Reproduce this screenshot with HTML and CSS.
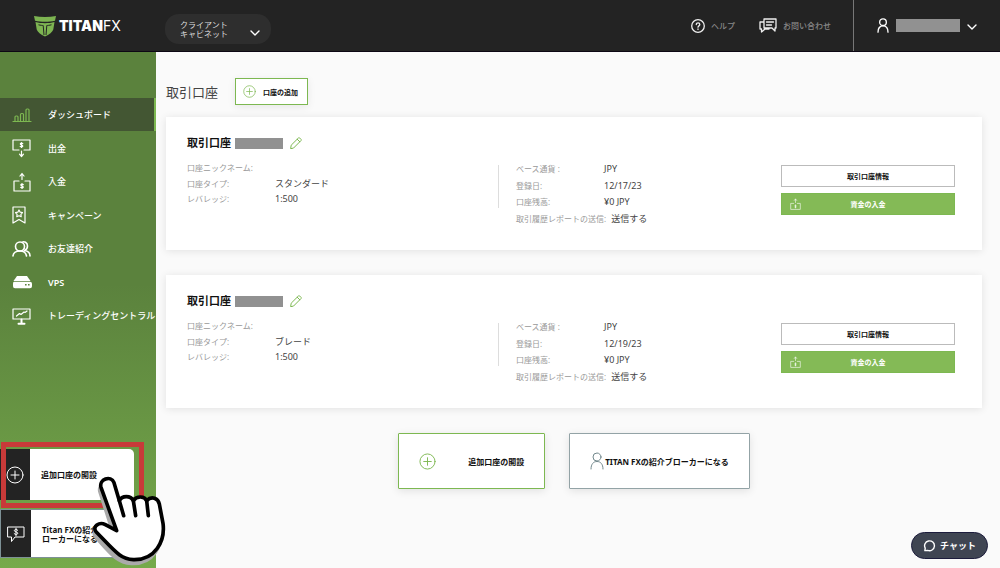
FILE: index.html
```html
<!DOCTYPE html>
<html lang="ja">
<head>
<meta charset="utf-8">
<meta name="viewport" content="width=device-width, initial-scale=1">
<title>Titan FX クライアントキャビネット</title>
<link rel="stylesheet" href="styles.css">
</head>
<body>
<svg class="defs" aria-hidden="true">
  <symbol id="plus" viewBox="0 0 18 18"><circle cx="9" cy="9" r="8"/><path d="M9 5v8M5 9h8"/></symbol>
  <symbol id="chevron" viewBox="0 0 10 6"><path d="M1 1l4 4 4-4"/></symbol>
  <symbol id="person" viewBox="0 0 14 18"><circle cx="7" cy="5" r="4"/><path d="M1 17c0-5 2.500-7.500 6-7.500s6 2.500 6 7.500"/></symbol>
  <symbol id="deposit" viewBox="0 0 18 20"><path d="M6 9H1v10h16V9h-5M9 7.500V2M7 4l2-2.500L11 4"/><path d="M10.300 12.600c-.8-.8-2.500-.5-2.500.5s2.500.8 2.500 1.900-1.800 1.200-2.600.4M9 11.500v5"/></symbol>
  <symbol id="pencil" viewBox="0 0 12 12"><path d="M.7 11.300l.5-3.100L8.300 1.100c.5-.5 1-.5 1.500 0l1.100 1.100c.5.5.5 1 0 1.500l-7.100 7.100zM7.200 2.200l2.600 2.600"/></symbol>
</svg>

<header class="topbar">
  <a class="logo" href="#" aria-label="TITANFX">
    <svg class="logo-mark" viewBox="0 0 22 22" aria-hidden="true">
      <path class="logo-fill" d="M0 1c7 1.300 15 1.300 22 0l-1 4.700c-6 1.400-14 1.400-20 0z"/>
      <path class="logo-fill" d="M1.500 7C4.500 7.800 7.500 8.200 11 8.200s6.500-.4 9.500-1.200l-1.200 7.500c-.7 2.500-4 5-8.300 7-4.300-2-7.600-4.500-8.300-7z"/>
      <path class="logo-cut" d="M4.500 9.800c2 .5 4 .7 4.700.7l.8 9.500M17.500 9.800c-2 .5-4 .7-4.700.7L12 20"/>
    </svg>
    <span class="logo-text"><b>TITAN</b>FX</span>
  </a>
  <button class="cabinet" type="button">
    <span>クライアント<br>キャビネット</span>
    <svg class="line chevron" aria-hidden="true"><use href="#chevron"/></svg>
  </button>
  <nav class="toplinks">
    <a class="toplink" href="#">
      <svg class="line icon-help" viewBox="0 0 14 14" aria-hidden="true"><circle cx="7" cy="7" r="6.300"/><path d="M5.300 5.600c0-2.200 3.500-2.200 3.500 0 0 1.300-1.800 1.200-1.800 2.600M7 10v.4"/></svg>
      ヘルプ
    </a>
    <a class="toplink" href="#">
      <svg class="line icon-chat" viewBox="0 0 18 15" aria-hidden="true"><path d="M5 1h12v9h-1v3l-3-3H5zM7.500 4h7M7.500 7h5M5 4H1v7h1.500v3L6 11h4v-1"/></svg>
      お問い合わせ
    </a>
  </nav>
  <button class="user" type="button" aria-label="ユーザーメニュー">
    <svg class="line icon-user" aria-hidden="true"><use href="#person"/></svg>
    <span class="redacted user-name"></span>
    <svg class="line chevron" aria-hidden="true"><use href="#chevron"/></svg>
  </button>
</header>

<div class="shell">
  <aside class="sidebar">
    <nav class="menu">
      <a class="item active" href="#">
        <svg class="line" viewBox="0 0 20 20" aria-hidden="true"><path d="M1 16.500h18M3 16v-4q0-1 1-1h1q1 0 1 1v4M8.500 16V9.500q0-1 1-1h1q1 0 1 1V16M14 16V5q0-1 1-1h1q1 0 1 1v11"/></svg>
        ダッシュボード
      </a>
      <a class="item" href="#">
        <svg class="line" viewBox="0 0 20 20" aria-hidden="true"><path d="M7 12H1V2h17v10h-6M9.500 13v5M7.500 16.200l2 2.300 2-2.300"/><path d="M10.800 5.600c-.8-.8-2.500-.5-2.500.5s2.500.8 2.500 1.900-1.800 1.200-2.600.4M9.500 4.500v5"/></svg>
        出金
      </a>
      <a class="item" href="#">
        <svg class="line" aria-hidden="true"><use href="#deposit"/></svg>
        入金
      </a>
      <a class="item" href="#">
        <svg class="line" viewBox="0 0 20 20" aria-hidden="true"><path d="M1 2h12v16l-6-3.500L1 18zM7 5l1.200 2.200 2.300.4-1.600 1.700.3 2.400L7 10.700l-2.200 1 .3-2.400-1.600-1.700 2.300-.4z"/></svg>
        キャンペーン
      </a>
      <a class="item" href="#">
        <svg class="line bold" viewBox="0 0 20 20" aria-hidden="true"><circle cx="8" cy="7.500" r="4.500"/><path d="M1 17c.3-3 2.500-5 7-5s6 2 6.500 5M10 3.300c2-1.300 5.500 0 5.500 3.700 0 2.500-1.500 4-3 4.500 4 .5 5.500 3 5.500 5.500"/></svg>
        お友達紹介
      </a>
      <a class="item strong" href="#">
        <svg class="solid" viewBox="0 0 20 20" aria-hidden="true"><path d="M5 4h10l3.500 5h-17z"/><path fill-rule="evenodd" d="M2 9.700h16q2 0 2 2v2.600q0 2-2 2H3q-2 0-2-2v-2.600q0-2 1-2zM13 12v1.600h1.600V12zm3 0v1.600h1.600V12z"/></svg>
        VPS
      </a>
      <a class="item" href="#">
        <svg class="line" viewBox="0 0 20 20" aria-hidden="true"><path d="M1 3h17v10H1zM4.500 10l3-2.500 1.500 1 3-2.500 1 .5 2-1.500"/><path class="stand" d="M9.500 13.500v4M6.500 17.700h6"/></svg>
        トレーディングセントラル
      </a>
    </nav>
    <div class="promos">
      <div class="promo-wrap">
        <button class="promo" type="button">
          <span class="promo-icon"><svg class="line" aria-hidden="true"><use href="#plus"/></svg></span>
          <span class="promo-text">追加口座の開設</span>
        </button>
        <span class="highlight"></span>
      </div>
      <button class="promo outlined" type="button">
        <span class="promo-icon"><svg class="line" viewBox="0 0 18 18" aria-hidden="true"><path d="M1 2h16v10H8l-3.500 4.500V12H1z"/><path d="M10.800 5.300C10 4 7.300 4.300 7.300 5.700s3.500 1 3.500 2.500-2.800 1.700-3.700.4M9 3.200v7.600"/></svg></span>
        <span class="promo-text">Titan FXの紹介ブ<br>ローカーになる</span>
      </button>
    </div>
    <svg class="hand" viewBox="276 132 222 282" aria-hidden="true">
      <path class="hand-shadow" d="M299 184C294 162 329 148 338 170L354 224C362 208 388 208 396 224L438 224L478 232L482 290C490 345 462 404 394 401C352 399 332 372 286 320C276 306 296 288 312 298L338 306z"/>
      <path class="hand-body" d="M303 172C296 148 333 134 342 158L358 212C366 196 392 196 400 212C410 197 434 198 440 212C456 196 474 206 478 222L489 280C496 332 466 391 400 389C360 387 344 362 288 305C276 290 298 274 316 284L350 302z"/>
      <path class="hand-lines" d="M358 212L371 257M400 212L407 257M440 212L445 257"/>
    </svg>
  </aside>

  <main class="content">
    <div class="heading">
      <h1>取引口座</h1>
      <button class="add" type="button"><svg class="line" aria-hidden="true"><use href="#plus"/></svg>口座の追加</button>
    </div>

    <section class="card">
      <h2>取引口座 <span class="redacted account-no"></span><svg class="line pencil" aria-hidden="true"><use href="#pencil"/></svg></h2>
      <dl class="facts primary">
        <div><dt>口座ニックネーム:</dt><dd></dd></div>
        <div><dt>口座タイプ:</dt><dd>スタンダード</dd></div>
        <div><dt>レバレッジ:</dt><dd>1:500</dd></div>
      </dl>
      <dl class="facts secondary">
        <div><dt>ベース通貨 :</dt><dd>JPY</dd></div>
        <div><dt>登録日:</dt><dd>12/17/23</dd></div>
        <div><dt>口座残高:</dt><dd>¥0 JPY</dd></div>
        <div><dt>取引履歴レポートの送信:</dt><dd>送信する</dd></div>
      </dl>
      <div class="actions">
        <button class="btn" type="button">取引口座情報</button>
        <button class="btn fund" type="button"><svg class="line" aria-hidden="true"><use href="#deposit"/></svg>資金の入金</button>
      </div>
    </section>

    <section class="card">
      <h2>取引口座 <span class="redacted account-no"></span><svg class="line pencil" aria-hidden="true"><use href="#pencil"/></svg></h2>
      <dl class="facts primary">
        <div><dt>口座ニックネーム:</dt><dd></dd></div>
        <div><dt>口座タイプ:</dt><dd>ブレード</dd></div>
        <div><dt>レバレッジ:</dt><dd>1:500</dd></div>
      </dl>
      <dl class="facts secondary">
        <div><dt>ベース通貨 :</dt><dd>JPY</dd></div>
        <div><dt>登録日:</dt><dd>12/19/23</dd></div>
        <div><dt>口座残高:</dt><dd>¥0 JPY</dd></div>
        <div><dt>取引履歴レポートの送信:</dt><dd>送信する</dd></div>
      </dl>
      <div class="actions">
        <button class="btn" type="button">取引口座情報</button>
        <button class="btn fund" type="button"><svg class="line" aria-hidden="true"><use href="#deposit"/></svg>資金の入金</button>
      </div>
    </section>

    <div class="footer-actions">
      <button class="big open" type="button"><svg class="line" aria-hidden="true"><use href="#plus"/></svg>追加口座の開設</button>
      <button class="big broker" type="button"><svg class="line" aria-hidden="true"><use href="#person"/></svg>TITAN FXの紹介ブローカーになる</button>
    </div>
  </main>
</div>

<button class="chat" type="button">
  <svg class="line" viewBox="0 0 14 14" aria-hidden="true"><path d="M2 12.500l.4-2.600A5.300 5.300 0 1 1 5 12.200z"/></svg>
  チャット
</button>
</body>
</html>
```

FILE: styles.css
```css
* { box-sizing: border-box; }

body {
  margin: 0;
  min-height: 100vh;
  display: flex;
  flex-direction: column;
  background: #fafafa;
  color: #444;
  font-family: "Noto Sans", "Noto Sans CJK JP", sans-serif;
  font-size: 9px;
}

a { color: inherit; text-decoration: none; }

button {
  margin: 0;
  padding: 0;
  border: 0;
  background: none;
  color: inherit;
  font: inherit;
  cursor: pointer;
}

.defs { position: absolute; width: 0; height: 0; }

.line {
  fill: none;
  stroke: currentColor;
  stroke-width: 1;
  stroke-linecap: round;
  stroke-linejoin: round;
  flex: none;
}

.solid { fill: currentColor; flex: none; }

.redacted { display: inline-block; background: #919191; }

/* Top bar */
.topbar {
  display: flex;
  align-items: stretch;
  height: 52px;
  background: #232323;
  border-bottom: 1px solid #0d0714;
  color: #fff;
}

.logo {
  display: flex;
  align-items: center;
  gap: 3px;
  margin-left: 34px;
  width: 131px;
}

.logo-mark { width: 22px; height: 22px; }
.logo-fill { fill: #7db451; }
.logo-cut { fill: none; stroke: #232323; stroke-width: 1; }

.logo-text {
  font-family: Inter, sans-serif;
  font-size: 14px;
  line-height: 18px;
  font-weight: 400;
}

.logo-text b { font-weight: 900; }

.cabinet {
  align-self: center;
  display: flex;
  align-items: center;
  justify-content: space-between;
  width: 106px;
  height: 30px;
  margin-top: 6px;
  padding: 0 11px 0 15px;
  border-radius: 14px;
  background: #2e2e2e;
  color: #ddd;
  font-size: 8px;
  line-height: 9px;
  text-align: left;
}

.chevron { width: 10px; height: 6px; }
.cabinet .chevron { margin-top: 8px; color: #fff; stroke-width: 1.4; }

.toplinks {
  display: flex;
  align-items: center;
  gap: 24px;
  margin-left: auto;
  padding-right: 22px;
}

.toplink {
  display: flex;
  align-items: center;
  gap: 6px;
  color: #888;
  font-size: 8px;
  font-weight: 500;
}

.toplink svg { color: #eee; stroke-width: 1.3; }
.icon-help { width: 14px; height: 14px; }
.icon-chat { width: 18px; height: 15px; }

.user {
  display: flex;
  align-items: center;
  gap: 7px;
  padding: 0 23px;
  border-left: 1px solid #777;
}

.icon-user { width: 12px; height: 15px; stroke-width: 1.6; }
.user-name { width: 64px; height: 13px; }
.user .chevron { margin-top: 2px; stroke-width: 1.4; }

/* Shell */
.shell { flex: 1; display: flex; }

.sidebar {
  position: relative;
  flex: none;
  width: 156px;
  display: flex;
  flex-direction: column;
  justify-content: space-between;
  padding: 46px 0 10px;
  background: linear-gradient(#5b823d 0%, #5b823d 45%, #76aa4b 100%);
  color: #fff;
}

.menu {
  display: grid;
  grid-auto-rows: 33px 34px;
}

.item {
  display: flex;
  align-items: center;
  gap: 16px;
  padding-left: 12px;
  font-size: 9px;
  font-weight: 500;
  white-space: nowrap;
}

.item.strong { font-weight: 600; }

.item svg { width: 20px; height: 20px; stroke-width: 1.2; }
.item svg.bold { stroke-width: 1.6; }
.item .stand { stroke-width: 2; }

.item.active {
  background: #435633;
  border-right: 2px solid #7db851;
}

.item.active svg { color: #7db851; }

.promos { display: grid; gap: 9px; }
.promo-wrap { position: relative; }

.promo {
  display: flex;
  width: 134px;
  height: 51px;
  overflow: hidden;
  border-radius: 0 5px 5px 0;
  background: #fff;
  color: #111;
  font-size: 8px;
  font-weight: 700;
  line-height: 9px;
  text-align: left;
}

.promo.outlined { height: 49px; border: 1px solid #7d9196; border-radius: 0; }

.promo-icon {
  flex: none;
  display: flex;
  align-items: center;
  justify-content: center;
  width: 30px;
  height: 100%;
  background: #232323;
  color: #fff;
}

.promo-icon svg { width: 18px; height: 18px; }

.promo-text { align-self: center; padding-left: 11px; white-space: nowrap; }

.highlight {
  position: absolute;
  left: 1px;
  top: -7px;
  width: 143px;
  height: 66px;
  border: 5px solid #c83a39;
}

.hand {
  position: absolute;
  left: 92px;
  bottom: 0;
  width: 74px;
  height: 94px;
  z-index: 2;
}

.hand-shadow { fill: #aaa; stroke: #aaa; stroke-width: 10; }
.hand-body { fill: #fff; stroke: #000; stroke-width: 11; stroke-linejoin: round; }
.hand-lines { fill: none; stroke: #000; stroke-width: 11; stroke-linecap: round; }

/* Content */
.content {
  flex: 1;
  min-width: 0;
  padding: 26px 18px 16px 10px;
}

.heading {
  display: flex;
  align-items: center;
  gap: 17px;
  margin-bottom: 12px;
}

h1, h2, dl, dd { margin: 0; }

h1 {
  font-size: 13px;
  line-height: 18px;
  font-weight: 400;
  color: #444;
}

.add {
  display: flex;
  align-items: center;
  gap: 7px;
  height: 27px;
  padding: 0 9px 0 7px;
  border: 1px solid #7db851;
  background: #fff;
  box-shadow: 0 2px 8px rgba(0, 0, 0, .08);
  color: #111;
  font-size: 7px;
  font-weight: 700;
}

.add svg { width: 13px; height: 13px; color: #7db851; }

.card {
  display: grid;
  grid-template-columns: 312fr 282fr 174px;
  row-gap: 9px;
  margin-bottom: 25px;
  padding: 18px 27px 24px 21px;
  align-content: start;
  background: #fff;
  box-shadow: 0 1px 8px rgba(0, 0, 0, .1);
}

h2 {
  grid-column: 1 / -1;
  display: flex;
  align-items: center;
  gap: 4px;
  font-size: 11px;
  line-height: 16px;
  font-weight: 700;
  color: #111;
}

.account-no { width: 48px; height: 11px; }
.pencil { width: 12px; height: 12px; margin-left: 3px; color: #7db851; }

.facts { display: grid; align-content: start; }

.primary {
  grid-auto-rows: 15px 16px;
  background: linear-gradient(#ddd, #ddd) no-repeat right 5px / 1px 43px;
}

.secondary { grid-auto-rows: 17px 16px; padding-left: 17px; }

.facts div { display: flex; align-items: center; white-space: nowrap; }

dt {
  min-width: 88px;
  padding-right: 5px;
  color: #999;
  font-size: 8px;
}

dd { font-size: 9px; color: #444; }

.actions {
  display: grid;
  align-content: start;
  gap: 6px;
  padding-top: 5px;
}

.btn {
  display: flex;
  align-items: center;
  justify-content: center;
  position: relative;
  height: 22px;
  border: 1px solid #bbb;
  background: #fff;
  color: #111;
  font-size: 7px;
  font-weight: 700;
}

.fund { border-color: #7db851; background: #84ba56; color: #fff; }

.fund svg {
  position: absolute;
  left: 8px;
  width: 11px;
  height: 12px;
}

.footer-actions {
  display: flex;
  justify-content: center;
  gap: 24px;
}

.big {
  display: flex;
  align-items: center;
  height: 56px;
  padding: 0 20px;
  border: 1px solid #7db851;
  border-radius: 1px;
  background: #fff;
  box-shadow: 0 2px 9px rgba(0, 0, 0, .1);
  color: #111;
  font-size: 8px;
  font-weight: 700;
  white-space: nowrap;
}

.open { gap: 32px; }
.open svg { width: 17px; height: 17px; color: #7db851; }
.broker { gap: 1px; border-color: #93a3a6; }
.broker svg { width: 14px; height: 18px; color: #72888c; }

/* Chat launcher */
.chat {
  position: fixed;
  right: 12px;
  bottom: 9px;
  display: flex;
  align-items: center;
  gap: 4px;
  height: 27px;
  padding: 0 11px;
  border: 1px solid #1c1c3c;
  border-radius: 14px;
  background: #3f4552;
  color: #fff;
  font-size: 9px;
  font-weight: 700;
}

.chat svg { width: 13px; height: 13px; stroke-width: 1.5; }
```
